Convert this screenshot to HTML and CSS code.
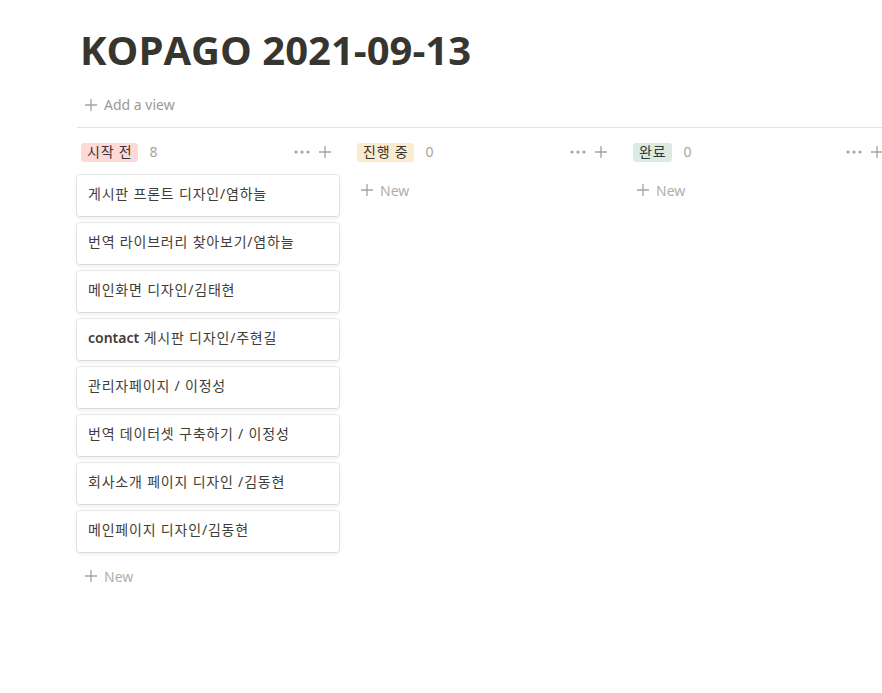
FILE: index.html
```html
<!DOCTYPE html>
<html>
<head>
	<meta charset="utf-8">
	<title>KOPAGO 2021-09-13</title>
	<link rel="stylesheet" href="styles.css">
</head>
<body>
<div class="page">
	<h1 class="title">KOPAGO 2021-09-13</h1>
	<div class="views">
		<div class="addView"><svg class="plus" viewBox="0 0 12 12"><path d="M6 0v12M0 6h12"/></svg>Add a view</div>
	</div>
	<div class="board">
		<div class="col">
			<div class="colHead">
				<span class="tag red">시작 전</span><span class="count">8</span>
				<span class="acts"><svg class="dots" viewBox="0 0 16 4"><circle cx="2" cy="2" r="1.6"/><circle cx="8" cy="2" r="1.6"/><circle cx="14" cy="2" r="1.6"/></svg><svg class="plus" viewBox="0 0 12 12"><path d="M6 0v12M0 6h12"/></svg></span>
			</div>
			<div class="card">게시판 프론트 디자인/염하늘</div>
			<div class="card">번역 라이브러리 찾아보기/염하늘</div>
			<div class="card">메인화면 디자인/김태현</div>
			<div class="card"><b>contact</b> 게시판 디자인/주현길</div>
			<div class="card">관리자페이지 / 이정성</div>
			<div class="card">번역 데이터셋 구축하기 / 이정성</div>
			<div class="card">회사소개 페이지 디자인 /김동현</div>
			<div class="card">메인페이지 디자인/김동현</div>
			<div class="newRow"><svg class="plus" viewBox="0 0 12 12"><path d="M6 0v12M0 6h12"/></svg>New</div>
		</div>
		<div class="col">
			<div class="colHead">
				<span class="tag yellow">진행 중</span><span class="count">0</span>
				<span class="acts"><svg class="dots" viewBox="0 0 16 4"><circle cx="2" cy="2" r="1.6"/><circle cx="8" cy="2" r="1.6"/><circle cx="14" cy="2" r="1.6"/></svg><svg class="plus" viewBox="0 0 12 12"><path d="M6 0v12M0 6h12"/></svg></span>
			</div>
			<div class="newRow top"><svg class="plus" viewBox="0 0 12 12"><path d="M6 0v12M0 6h12"/></svg>New</div>
		</div>
		<div class="col">
			<div class="colHead">
				<span class="tag green">완료</span><span class="count">0</span>
				<span class="acts"><svg class="dots" viewBox="0 0 16 4"><circle cx="2" cy="2" r="1.6"/><circle cx="8" cy="2" r="1.6"/><circle cx="14" cy="2" r="1.6"/></svg><svg class="plus" viewBox="0 0 12 12"><path d="M6 0v12M0 6h12"/></svg></span>
			</div>
			<div class="newRow top"><svg class="plus" viewBox="0 0 12 12"><path d="M6 0v12M0 6h12"/></svg>New</div>
		</div>
	</div>
</div>
</body>
</html>
```

FILE: styles.css
```css
body,h1,div{margin:0;padding:0;}
body{background:#fff;color:#37352f;font:14px/1.5 "Noto Sans","Noto Sans CJK KR",sans-serif;overflow:hidden;}
.page{padding-left:77px;}
.title{font:700 40px/1.2 "Open Sans","Noto Sans CJK KR",sans-serif;color:#37352f;padding:26px 0 0 3px;}
.views{height:45px;margin-top:8px;border-bottom:1px solid #e3e2e0;display:flex;align-items:center;}
.addView{display:flex;align-items:center;color:#9b9a97;font-size:14px;padding-left:8px;}
.plus{width:12px;height:12px;stroke:#a5a4a1;stroke-width:1.3;fill:none;margin-right:7px;flex:none;}
.board{display:flex;gap:14px;padding-top:14px;}
.col{width:262px;flex:none;}
.colHead{display:flex;align-items:center;height:20px;padding-left:4px;margin-bottom:13px;}
.tag{font-size:14px;line-height:18px;padding:0 6px 1px;border-radius:3px;color:#37352f;letter-spacing:0.8px;}
.red{background:#ffd9d6;}
.yellow{background:#fbeccf;}
.green{background:#dbeae3;}
.count{color:#a5a4a1;margin-left:11px;padding-bottom:1px;}
.acts{margin-left:auto;display:flex;align-items:center;}
.dots{width:16px;height:4px;fill:#a5a4a1;margin-right:9px;}
.acts .plus{margin-right:8px;}
.card{height:41px;box-sizing:border-box;padding:0 11px 5px;display:flex;align-items:center;border-radius:3px;box-shadow:0 0 0 1px rgba(15,15,15,0.09),0 2px 4px rgba(15,15,15,0.08);margin-bottom:7px;background:#fff;color:#3f3d38;letter-spacing:0.8px;white-space:pre;}
.card b{font-weight:600;letter-spacing:0;}
.newRow{display:flex;align-items:center;color:#b0afac;height:32px;padding-left:8px;margin-top:8px;}
.newRow.top{margin-top:-1px;}
```
